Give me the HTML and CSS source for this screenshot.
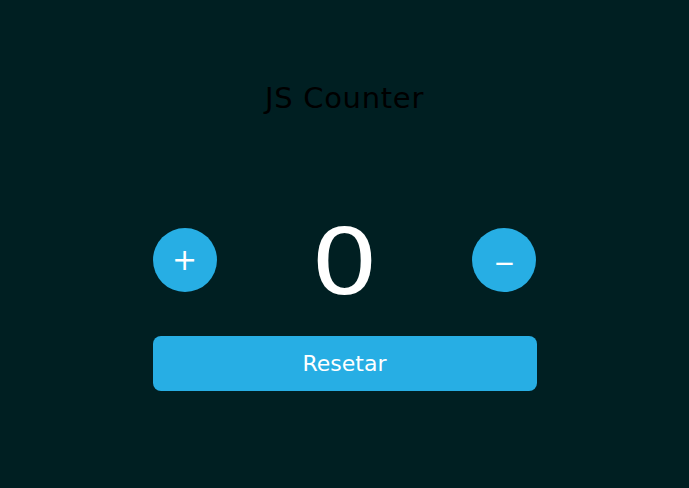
FILE: index.html
```html
<!DOCTYPE html>
<html lang="pt">
<head>
<meta charset="utf-8">
<title>JS Counter</title>
<link rel="stylesheet" href="styles.css">
</head>
<body>
<main class="app">
  <h1 class="title">JS Counter</h1>
  <div class="counter">
    <button class="round-btn">+</button>
    <span class="value">0</span>
    <button class="round-btn round-btn--minus">−</button>
  </div>
  <button class="reset-btn">Resetar</button>
</main>
</body>
</html>
```

FILE: styles.css
```css
html, body {
  margin: 0;
  padding: 0;
}
body {
  background: #001f22;
  font-family: "DejaVu Sans", "Open Sans", sans-serif;
  height: 488px;
}
.app {
  width: 384px;
  margin: 0 auto;
  padding-top: 76px;
  display: flex;
  flex-direction: column;
}
.title {
  margin: 0;
  text-align: center;
  font-size: 29px;
  font-weight: 400;
  color: #000;
  line-height: 44px;
  letter-spacing: 0.7px;
}
.counter {
  margin-top: 108px;
  display: flex;
  align-items: center;
  justify-content: space-between;
  height: 64px;
}
.round-btn {
  width: 64px;
  height: 64px;
  border-radius: 50%;
  border: none;
  background: #27aee4;
  color: #fff;
  font-family: inherit;
  font-size: 30px;
  line-height: 64px;
  padding: 0 0 2px;
}
.round-btn--minus {
  font-size: 26px;
  padding: 3px 0 0;
}
.value {
  color: #fff;
  font-size: 90px;
  line-height: 64px;
  transform: scaleX(1.18);
  padding-top: 6px;
}
.reset-btn {
  margin-top: 44px;
  height: 55px;
  border: none;
  border-radius: 8px;
  background: #27aee4;
  color: #fff;
  font-family: inherit;
  font-size: 22px;
}
```
